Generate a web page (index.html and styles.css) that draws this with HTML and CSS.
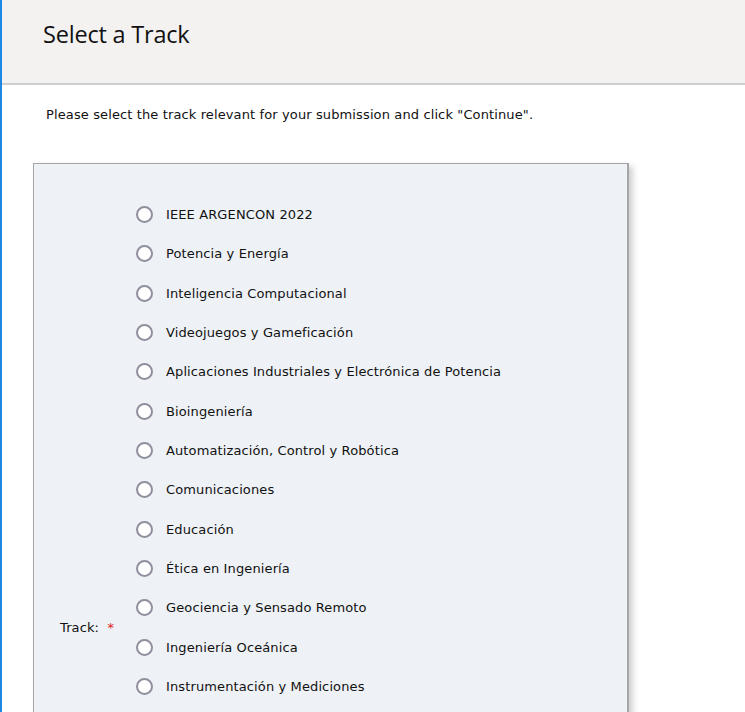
FILE: index.html
```html
<!DOCTYPE html>
<html lang="es">
<head>
<meta charset="utf-8">
<title>Select a Track</title>
<link rel="stylesheet" href="styles.css">
</head>
<body>
<div class="page">
  <header class="header">
    <h1 class="title">Select a Track</h1>
  </header>
  <p class="intro">Please select the track relevant for your submission and click "Continue".</p>
  <form class="box">
    <div class="field">
      <div class="label">Track: <span class="req">*</span></div>
      <div class="options">
        <label class="opt"><input type="radio" name="track"><span class="dot"></span><span>IEEE ARGENCON 2022</span></label>
        <label class="opt"><input type="radio" name="track"><span class="dot"></span><span>Potencia y Energía</span></label>
        <label class="opt"><input type="radio" name="track"><span class="dot"></span><span>Inteligencia Computacional</span></label>
        <label class="opt"><input type="radio" name="track"><span class="dot"></span><span>Videojuegos y Gameficación</span></label>
        <label class="opt"><input type="radio" name="track"><span class="dot"></span><span>Aplicaciones Industriales y Electrónica de Potencia</span></label>
        <label class="opt"><input type="radio" name="track"><span class="dot"></span><span>Bioingeniería</span></label>
        <label class="opt"><input type="radio" name="track"><span class="dot"></span><span>Automatización, Control y Robótica</span></label>
        <label class="opt"><input type="radio" name="track"><span class="dot"></span><span>Comunicaciones</span></label>
        <label class="opt"><input type="radio" name="track"><span class="dot"></span><span>Educación</span></label>
        <label class="opt"><input type="radio" name="track"><span class="dot"></span><span>Ética en Ingeniería</span></label>
        <label class="opt"><input type="radio" name="track"><span class="dot"></span><span>Geociencia y Sensado Remoto</span></label>
        <label class="opt"><input type="radio" name="track"><span class="dot"></span><span>Ingeniería Oceánica</span></label>
        <label class="opt"><input type="radio" name="track"><span class="dot"></span><span>Instrumentación y Mediciones</span></label>
        <label class="opt"><input type="radio" name="track"><span class="dot"></span><span>Microelectrónica y Sistemas Embebidos</span></label>
        <label class="opt"><input type="radio" name="track"><span class="dot"></span><span>Microondas y Antenas</span></label>
        <label class="opt"><input type="radio" name="track"><span class="dot"></span><span>Nanotecnología</span></label>
        <label class="opt"><input type="radio" name="track"><span class="dot"></span><span>Procesamiento de Señales</span></label>
        <label class="opt"><input type="radio" name="track"><span class="dot"></span><span>Sistemas de Información</span></label>
        <label class="opt"><input type="radio" name="track"><span class="dot"></span><span>Tecnologías de la Información</span></label>
        <label class="opt"><input type="radio" name="track"><span class="dot"></span><span>Telecomunicaciones</span></label>
        <label class="opt"><input type="radio" name="track"><span class="dot"></span><span>Transporte Inteligente</span></label>
        <label class="opt"><input type="radio" name="track"><span class="dot"></span><span>Otros</span></label>
      </div>
    </div>
  </form>
</div>
</body>
</html>
```
FILE: styles.css
```css
html, body {
  margin: 0;
  padding: 0;
  background: #ffffff;
}
body {
  border-left: 2px solid #1e88e5;
  min-height: 100vh;
  box-sizing: border-box;
  font-family: "DejaVu Sans", Verdana, sans-serif;
  font-size: 13px;
  letter-spacing: 0.12px;
  color: #111111;
}
.header {
  background: #f3f2f1;
  height: 85px;
  border-bottom: 2px solid #cfcfcf;
  box-sizing: border-box;
  padding: 18px 0 0 41px;
}
.title {
  margin: 0;
  font-family: "Open Sans", "Noto Sans", sans-serif;
  font-weight: 400;
  font-size: 23.5px;
  line-height: 32px;
  color: #111111;
  letter-spacing: -0.2px;
}
.intro {
  margin: 20px 0 0 44px;
  line-height: 20px;
  font-size: 13px;
}
.box {
  margin: 38px 0 40px 31px;
  width: 596px;
  box-sizing: border-box;
  background: #eef1f6;
  border: 1px solid #a6a6a6;
  border-right-width: 2px;
  box-shadow: 4px 3px 6px rgba(0, 0, 0, 0.18);
  padding: 31px 0 40px 26px;
}
.field {
  display: grid;
  grid-template-columns: 76px 1fr;
  align-items: center;
}
.label {
  font-size: 13px;
}
.req {
  color: #e02020;
  margin-left: 4px;
}
.options {
  display: flex;
  flex-direction: column;
}
.opt {
  display: flex;
  align-items: center;
  height: 39.33px;
  font-size: 13px;
  cursor: pointer;
}
.opt input {
  position: absolute;
  opacity: 0;
  width: 0;
  height: 0;
  margin: 0;
}
.dot {
  width: 17px;
  height: 17px;
  box-sizing: border-box;
  border: 2.5px solid #8f8f9d;
  border-radius: 50%;
  background: #ffffff;
  margin-right: 13px;
  flex: none;
}
```
